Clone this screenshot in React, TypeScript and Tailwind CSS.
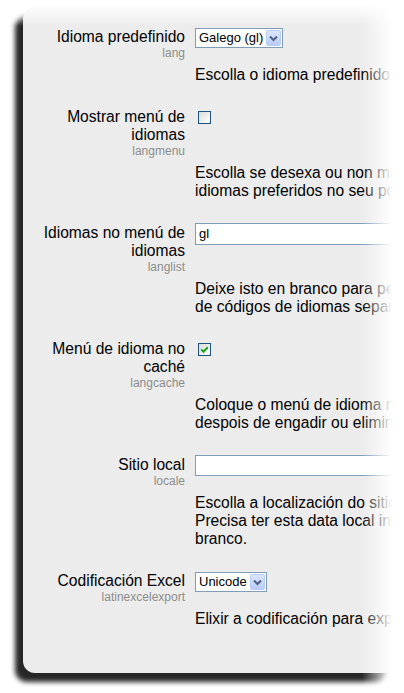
import React from "react";

type Setting = {
    label: string;
    name: string;
    control: "select" | "checkbox" | "text";
    value?: string;
    checked?: boolean;
    selectWidth?: string;
    inputHeight?: string;
    description: string[];
};

const settings: Setting[] = [
    {
        label: "Idioma predefinido",
        name: "lang",
        control: "select",
        value: "Galego (gl)",
        selectWidth: "w-[88px]",
        description: ["Escolla o idioma predefinido para todo o sitio."],
    },
    {
        label: "Mostrar menú de idiomas",
        name: "langmenu",
        control: "checkbox",
        checked: false,
        description: [
            "Escolla se desexa ou non mostrar o menú de",
            "idiomas preferidos no seu portal.",
        ],
    },
    {
        label: "Idiomas no menú de idiomas",
        name: "langlist",
        control: "text",
        value: "gl",
        inputHeight: "h-[22px]",
        description: [
            "Deixe isto en branco para permitir calquera idioma, ou escriba unha lista",
            "de códigos de idiomas separados por comas.",
        ],
    },
    {
        label: "Menú de idioma no caché",
        name: "langcache",
        control: "checkbox",
        checked: true,
        description: [
            "Coloque o menú de idioma na caché. Desactíveo",
            "despois de engadir ou eliminar paquetes.",
        ],
    },
    {
        label: "Sitio local",
        name: "locale",
        control: "text",
        value: "",
        inputHeight: "h-[21px]",
        description: [
            "Escolla a localización do sitio, que afecta ao formato.",
            "Precisa ter esta data local instalada ou deixe en",
            "branco.",
        ],
    },
    {
        label: "Codificación Excel",
        name: "latinexcelexport",
        control: "select",
        value: "Unicode",
        selectWidth: "w-[72px]",
        description: ["Elixir a codificación para exportar a Excel."],
    },
];

function SelectBox({ value, width }: { value: string; width: string }) {
    return (
        <div className={`flex h-[20px] ${width} items-stretch border border-[#7f9db9] bg-white`}>
            <span className="flex-1 pl-[3px] text-[13px] leading-[18px] text-black whitespace-nowrap overflow-hidden">
                {value}
            </span>
            <span className="m-px flex w-[15px] items-center justify-center rounded-[2px] border border-[#b9cdf6] bg-[linear-gradient(to_bottom,#dbe5fd,#b8cbf8)]">
                <svg width="9" height="7" viewBox="0 0 9 7">
                    <path d="M1 1.5 L4.5 5 L8 1.5" fill="none" stroke="#4d6185" strokeWidth="2" />
                </svg>
            </span>
        </div>
    );
}

function CheckBox({ checked }: { checked: boolean }) {
    return (
        <div className="mt-[3px] ml-[3px] flex h-[13px] w-[13px] items-center justify-center border border-[#1c5180] bg-[linear-gradient(135deg,#dcdcd7,#ffffff)]">
            {checked && (
                <svg width="9" height="9" viewBox="0 0 9 9">
                    <path d="M1.2 4.4 L3.5 6.8 L7.8 2.2" fill="none" stroke="#21a121" strokeWidth="2" />
                </svg>
            )}
        </div>
    );
}

export default function App() {
    return (
        <div
            className="relative h-[693px] w-[404px] overflow-hidden bg-white text-black"
            style={{ fontFamily: '"Liberation Sans", Arial, sans-serif' }}
        >
            <div className="ml-[23px] mt-[7px] w-[372px] overflow-hidden rounded-[12px] bg-[#ececec] pt-[21px] pb-[45px] shadow-[-8px_9px_5px_rgba(0,0,0,0.85)]">
                {settings.map((s) => (
                    <div key={s.name} className="mb-[24px] grid grid-cols-[146px_1fr] gap-x-[10px] pl-[16px] last:mb-0">
                        <div className="text-right">
                            <div className="text-[15.6px] leading-[18px]">{s.label}</div>
                            <div className="text-[12px] leading-[14px] text-[#8c8c8c]">{s.name}</div>
                        </div>
                        <div className="min-w-0">
                            {s.control === "select" && (
                                <SelectBox value={s.value ?? ""} width={s.selectWidth ?? "w-[88px]"} />
                            )}
                            {s.control === "checkbox" && <CheckBox checked={!!s.checked} />}
                            {s.control === "text" && (
                                <div
                                    className={`-mt-px ${s.inputHeight} w-[260px] border border-[#7f9db9] bg-white pl-[3px] text-[13px] leading-[20px]`}
                                >
                                    {s.value}
                                </div>
                            )}
                        </div>
                        <div className="col-start-2 mt-[6px] min-w-0 text-[15.6px] leading-[18px]">
                            {s.description.map((line) => (
                                <div key={line} className="whitespace-nowrap">
                                    {line}
                                </div>
                            ))}
                        </div>
                    </div>
                ))}
            </div>

            {/* paper fade over the top and right edges */}
            <div className="pointer-events-none absolute inset-x-0 top-0 h-[26px] bg-[linear-gradient(to_bottom,#ffffff_15%,rgba(255,255,255,0))]" />
            <div className="pointer-events-none absolute inset-y-0 right-0 w-[42px] bg-[linear-gradient(to_right,rgba(255,255,255,0),#ffffff_72%)]" />
        </div>
    );
}
